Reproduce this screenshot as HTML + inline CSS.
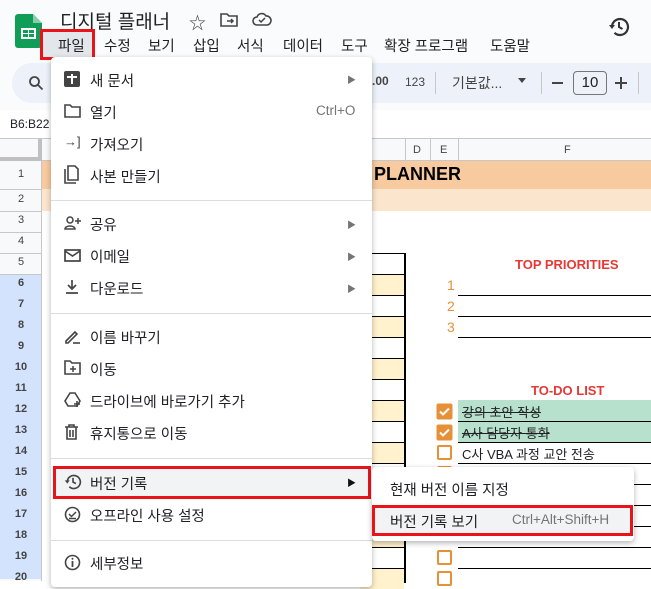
<!DOCTYPE html>
<html><head><meta charset="utf-8"><style>
*{margin:0;padding:0;box-sizing:border-box}
body{width:651px;height:579px;overflow:hidden;position:relative;background:#fff;font-family:"Liberation Sans","Noto Sans CJK KR",sans-serif;color:#202124}
.a{position:absolute}
.mi{position:absolute;left:90px;font-size:14.5px;color:#202124;white-space:nowrap}
.ic{position:absolute;left:64px}
.arr{position:absolute;left:347px;font-size:9px;color:#757575}
.div{position:absolute;left:51px;width:321px;height:1px;background:#dadce0}
.rn{position:absolute;left:0;width:42px;text-align:center;font-size:11px;color:#444}
.hl{position:absolute;height:1px;background:#000}
</style></head><body>
<div class="a" style="left:0;top:0;width:651px;height:110px;background:#f9fbfd"></div>
<svg class="a" style="left:15px;top:14px" width="27" height="34" viewBox="0 0 27 34"><path d="M3 0h15l9 9v22a3 3 0 0 1-3 3H3a3 3 0 0 1-3-3V3a3 3 0 0 1 3-3z" fill="#0f9d58"/><path d="M18 0v9h9z" fill="#87ceac"/><rect x="6" y="14" width="15" height="11" fill="#fff"/><rect x="8" y="16" width="5" height="3" fill="#0f9d58"/><rect x="14" y="16" width="5" height="3" fill="#0f9d58"/><rect x="8" y="20" width="5" height="3" fill="#0f9d58"/><rect x="14" y="20" width="5" height="3" fill="#0f9d58"/></svg>
<div class="a" style="left:60px;top:7px;font-size:19px;color:#202124">디지털 플래너</div>
<div class="a" style="left:189px;top:9px;font-size:17px;color:#444">☆</div>
<svg class="a" style="left:220px;top:12px" width="18" height="15" viewBox="0 0 18 15"><path d="M1 2h6l2 2h8v10H1z" fill="none" stroke="#444" stroke-width="1.6"/><path d="M7 9h6M11 7l2 2-2 2" stroke="#444" stroke-width="1.5" fill="none"/></svg>
<svg class="a" style="left:252px;top:12px" width="20" height="14" viewBox="0 0 20 14"><path d="M5 13a4 4 0 0 1 0-8 5 5 0 0 1 9-1 4.5 4.5 0 0 1 1 9z" fill="none" stroke="#444" stroke-width="1.6"/><path d="M7 8l2 2 4-4" fill="none" stroke="#444" stroke-width="1.5"/></svg>
<svg class="a" style="left:608px;top:16px" width="22" height="22" viewBox="0 0 22 22"><path d="M4 11a8 8 0 1 1 2.5 5.8" fill="none" stroke="#333" stroke-width="2.2"/><path d="M1 9l3 4 3-4z" fill="#333"/><path d="M11 6v5l3.5 2" fill="none" stroke="#333" stroke-width="2"/></svg>
<div class="a" style="left:42px;top:31px;width:51px;height:28px;background:#e3e6ea"></div>
<div class="a" style="top:35px;left:0;font-size:14.5px;color:#202124;white-space:nowrap">
<span class="a" style="left:58px">파일</span><span class="a" style="left:104px">수정</span><span class="a" style="left:148px">보기</span><span class="a" style="left:193px">삽입</span><span class="a" style="left:237px">서식</span><span class="a" style="left:283px">데이터</span><span class="a" style="left:341px">도구</span><span class="a" style="left:384px">확장 프로그램</span><span class="a" style="left:490px">도움말</span></div>
<div class="a" style="left:40px;top:29px;width:55px;height:31px;border:3px solid #e8141a"></div>
<div class="a" style="left:12px;top:63px;width:660px;height:40px;border-radius:20px;background:#edf2fa"></div>
<svg class="a" style="left:28px;top:75px" width="16" height="16" viewBox="0 0 16 16"><circle cx="6.5" cy="6.5" r="4.5" fill="none" stroke="#444" stroke-width="1.8"/><path d="M10 10l4.5 4.5" stroke="#444" stroke-width="1.8"/></svg>
<div class="a" style="left:372px;top:74px;font-size:12px;color:#444;font-weight:bold">.00</div>
<div class="a" style="left:405px;top:75px;font-size:12px;color:#444">123</div>
<div class="a" style="left:435px;top:72px;width:1px;height:22px;background:#c7c7c7"></div>
<div class="a" style="left:452px;top:73px;font-size:14px;color:#444">기본값...</div>
<div class="a" style="left:518px;top:78px;border:4px solid transparent;border-top:5px solid #444"></div>
<div class="a" style="left:541px;top:72px;width:1px;height:22px;background:#c7c7c7"></div>
<div class="a" style="left:552px;top:82px;width:11px;height:2px;background:#444"></div>
<div class="a" style="left:573px;top:71px;width:34px;height:24px;border:1px solid #747775;border-radius:4px;text-align:center;font-size:15px;line-height:22px;color:#202124">10</div>
<div class="a" style="left:615px;top:82px;width:12px;height:2px;background:#444"></div>
<div class="a" style="left:620px;top:77px;width:2px;height:12px;background:#444"></div>
<div class="a" style="left:638px;top:72px;width:1px;height:22px;background:#c7c7c7"></div>
<div class="a" style="left:10px;top:117px;font-size:12px;color:#202124">B6:B22</div>
<div class="a" style="left:0;top:138px;width:651px;height:1px;background:#c7c7c7"></div>
<div class="a" style="left:0;top:139px;width:651px;height:22px;background:#f8f9fa;border-bottom:1px solid #c7c7c7"></div>
<div class="a" style="left:0;top:139px;width:42px;height:22px;background:#f8f9fa;border-right:4px solid #c0c0c0;border-bottom:4px solid #c0c0c0"></div>
<div class="a" style="left:405px;top:139px;width:1px;height:22px;background:#c7c7c7"></div>
<div class="a" style="left:430px;top:139px;width:1px;height:22px;background:#c7c7c7"></div>
<div class="a" style="left:458px;top:139px;width:1px;height:22px;background:#c7c7c7"></div>
<div class="a" style="left:413px;top:144px;font-size:11px;color:#444">D</div>
<div class="a" style="left:440px;top:144px;font-size:11px;color:#444">E</div>
<div class="a" style="left:564px;top:144px;font-size:11px;color:#444">F</div>
<div class="a" style="left:0;top:161px;width:42px;height:420px;background:#f8f9fa;border-right:1px solid #c7c7c7"></div>
<div class="a" style="left:0;top:274px;width:42px;height:305px;background:#d3e3fd;border-right:1px solid #c7c7c7"></div>
<div class="rn" style="top:168px">1</div><div class="rn" style="top:193px">2</div><div class="rn" style="top:214px">3</div><div class="rn" style="top:235px">4</div><div class="rn" style="top:256px">5</div>
<div style="font-weight:bold">
<div class="rn" style="top:277px">6</div><div class="rn" style="top:298px">7</div><div class="rn" style="top:319px">8</div><div class="rn" style="top:340px">9</div><div class="rn" style="top:361px">10</div><div class="rn" style="top:382px">11</div><div class="rn" style="top:403px">12</div><div class="rn" style="top:424px">13</div><div class="rn" style="top:445px">14</div><div class="rn" style="top:466px">15</div><div class="rn" style="top:487px">16</div><div class="rn" style="top:508px">17</div><div class="rn" style="top:529px">18</div><div class="rn" style="top:550px">19</div><div class="rn" style="top:571px">20</div></div>
<div class="a" style="left:0;top:189px;width:42px;height:1px;background:#c7c7c7"></div>
<div class="a" style="left:0;top:211px;width:42px;height:1px;background:#c7c7c7"></div>
<div class="a" style="left:0;top:232px;width:42px;height:1px;background:#c7c7c7"></div>
<div class="a" style="left:0;top:253px;width:42px;height:1px;background:#c7c7c7"></div>
<div class="a" style="left:0;top:274px;width:42px;height:1px;background:#c7c7c7"></div>
<div class="a" style="left:42px;top:161px;width:609px;height:28px;background:#f7caa0"></div>
<div class="a" style="left:374px;top:164px;font-size:18px;font-weight:bold;color:#000">PLANNER</div>
<div class="a" style="left:42px;top:189px;width:609px;height:22px;background:#fce5cd"></div>
<div class="a" style="left:360px;top:274px;width:44px;height:21px;background:#fff2cc"></div>
<div class="a" style="left:360px;top:316px;width:44px;height:21px;background:#fff2cc"></div>
<div class="a" style="left:360px;top:358px;width:44px;height:21px;background:#fff2cc"></div>
<div class="a" style="left:360px;top:400px;width:44px;height:21px;background:#fff2cc"></div>
<div class="a" style="left:360px;top:442px;width:44px;height:21px;background:#fff2cc"></div>
<div class="a" style="left:360px;top:484px;width:44px;height:21px;background:#fff2cc"></div>
<div class="a" style="left:360px;top:526px;width:44px;height:21px;background:#fff2cc"></div>
<div class="a" style="left:360px;top:568px;width:44px;height:21px;background:#fff2cc"></div>
<div class="a" style="left:404px;top:253px;width:1.5px;height:330px;background:#000"></div>
<div class="hl" style="left:360px;width:45px;top:253px"></div><div class="hl" style="left:360px;width:45px;top:274px"></div><div class="hl" style="left:360px;width:45px;top:295px"></div><div class="hl" style="left:360px;width:45px;top:316px"></div><div class="hl" style="left:360px;width:45px;top:337px"></div><div class="hl" style="left:360px;width:45px;top:358px"></div><div class="hl" style="left:360px;width:45px;top:379px"></div><div class="hl" style="left:360px;width:45px;top:400px"></div><div class="hl" style="left:360px;width:45px;top:421px"></div><div class="hl" style="left:360px;width:45px;top:442px"></div><div class="hl" style="left:360px;width:45px;top:463px"></div><div class="hl" style="left:360px;width:45px;top:484px"></div><div class="hl" style="left:360px;width:45px;top:505px"></div><div class="hl" style="left:360px;width:45px;top:526px"></div><div class="hl" style="left:360px;width:45px;top:547px"></div><div class="hl" style="left:360px;width:45px;top:568px"></div>
<div class="a" style="left:515px;top:257px;font-size:13px;font-weight:bold;color:#e53935">TOP PRIORITIES</div>
<div class="a" style="left:447px;top:277px;font-size:14px;color:#e69138">1</div>
<div class="a" style="left:447px;top:298px;font-size:14px;color:#e69138">2</div>
<div class="a" style="left:447px;top:319px;font-size:14px;color:#e69138">3</div>
<div class="hl" style="left:458px;width:193px;top:295px"></div><div class="hl" style="left:458px;width:193px;top:316px"></div><div class="hl" style="left:458px;width:193px;top:337px"></div>
<div class="a" style="left:531px;top:383px;font-size:13px;font-weight:bold;color:#e53935">TO-DO LIST</div>
<div class="a" style="left:458px;top:400px;width:193px;height:42px;background:#b7e1cd"></div>
<div class="hl" style="left:458px;width:193px;top:421px"></div><div class="hl" style="left:458px;width:193px;top:442px"></div><div class="hl" style="left:458px;width:193px;top:463px"></div><div class="hl" style="left:458px;width:193px;top:484px"></div><div class="hl" style="left:458px;width:193px;top:505px"></div><div class="hl" style="left:458px;width:193px;top:526px"></div><div class="hl" style="left:458px;width:193px;top:547px"></div><div class="hl" style="left:458px;width:193px;top:568px"></div>
<div class="a" style="left:462px;top:402px;font-size:13px;text-decoration:line-through">강의 초안 작성</div>
<div class="a" style="left:462px;top:423px;font-size:13px;text-decoration:line-through">A사 담당자 통화</div>
<div class="a" style="left:462px;top:444px;font-size:13px">C사 VBA 과정 교안 전송</div>
<svg class="a" style="left:436px;top:403px" width="17" height="17" viewBox="0 0 17 17"><rect x="0.5" y="0.5" width="16" height="16" rx="2" fill="#e69138"/><path d="M4 8.5l3 3 6-6" stroke="#fff" stroke-width="2" fill="none"/></svg>
<svg class="a" style="left:436px;top:424px" width="17" height="17" viewBox="0 0 17 17"><rect x="0.5" y="0.5" width="16" height="16" rx="2" fill="#e69138"/><path d="M4 8.5l3 3 6-6" stroke="#fff" stroke-width="2" fill="none"/></svg>
<div class="a" style="left:437px;top:445px;width:15px;height:15px;border:2px solid #e69138;border-radius:2px"></div>
<div class="a" style="left:437px;top:466px;width:15px;height:15px;border:2px solid #e69138;border-radius:2px"></div>
<div class="a" style="left:437px;top:550px;width:15px;height:15px;border:2px solid #e69138;border-radius:2px"></div>
<div class="a" style="left:437px;top:571px;width:15px;height:15px;border:2px solid #e69138;border-radius:2px"></div>
<div class="a" style="left:51px;top:57px;width:321px;height:530px;background:#fff;border-radius:4px;box-shadow:0 2px 6px rgba(0,0,0,.3)"></div>
<svg class="ic" style="top:71px" width="16" height="16" viewBox="0 0 16 16"><rect width="16" height="16" rx="2" fill="#444"/><path d="M8 3v10M3 6h10" stroke="#fff" stroke-width="2"/></svg>
<div class="mi" style="top:70px">새 문서</div><div class="arr" style="top:73px">▶</div>
<svg class="ic" style="top:104px" width="17" height="14" viewBox="0 0 17 14"><path d="M1 1h5l2 2h8v10H1z" fill="none" stroke="#444" stroke-width="1.6"/></svg>
<div class="mi" style="top:102px">열기</div><div class="a" style="left:316px;top:103px;font-size:13.5px;color:#757575">Ctrl+O</div>
<div class="ic" style="top:134px;font-size:13px;color:#444">→]</div>
<div class="mi" style="top:134px">가져오기</div>
<svg class="ic" style="top:165px" width="16" height="19" viewBox="0 0 16 19"><path d="M1 4v14h11" fill="none" stroke="#444" stroke-width="1.6"/><path d="M4 1h7l3 3v11H4z" fill="none" stroke="#444" stroke-width="1.6"/></svg>
<div class="mi" style="top:166px">사본 만들기</div>
<div class="div" style="top:200px"></div>
<svg class="ic" style="top:216px" width="18" height="14" viewBox="0 0 18 14"><circle cx="6" cy="4" r="3" fill="none" stroke="#444" stroke-width="1.5"/><path d="M1 13c0-4 10-4 10 0z" fill="none" stroke="#444" stroke-width="1.5"/><path d="M14 2v6M11 5h6" stroke="#444" stroke-width="1.5"/></svg>
<div class="mi" style="top:214px">공유</div><div class="arr" style="top:218px">▶</div>
<svg class="ic" style="top:249px" width="17" height="13" viewBox="0 0 17 13"><rect x="1" y="1" width="15" height="11" fill="none" stroke="#444" stroke-width="1.7"/><path d="M1 2l7.5 5L16 2" fill="none" stroke="#444" stroke-width="1.6"/></svg>
<div class="mi" style="top:246px">이메일</div><div class="arr" style="top:250px">▶</div>
<svg class="ic" style="top:279px" width="16" height="16" viewBox="0 0 16 16"><path d="M8 1v9M4 6l4 4 4-4M2 14h12" fill="none" stroke="#444" stroke-width="1.7"/></svg>
<div class="mi" style="top:278px">다운로드</div><div class="arr" style="top:282px">▶</div>
<div class="div" style="top:313px"></div>
<svg class="ic" style="top:328px" width="17" height="16" viewBox="0 0 17 16"><path d="M2 13L11 4l2 2-9 9H2z" fill="none" stroke="#444" stroke-width="1.6"/><path d="M9 15h7" stroke="#444" stroke-width="1.6"/></svg>
<div class="mi" style="top:327px">이름 바꾸기</div>
<svg class="ic" style="top:360px" width="17" height="15" viewBox="0 0 17 15"><path d="M1 1h5l2 2h8v11H1z" fill="none" stroke="#444" stroke-width="1.6"/><path d="M6 9h6M9 6v6" stroke="#444" stroke-width="1.5"/></svg>
<div class="mi" style="top:359px">이동</div>
<svg class="ic" style="top:391px" width="18" height="17" viewBox="0 0 18 17"><path d="M6 2h5l5 8-3 5H4l-3-5z" fill="none" stroke="#444" stroke-width="1.6"/><path d="M13 10v6M10 13h6" stroke="#444" stroke-width="1.6"/></svg>
<div class="mi" style="top:391px">드라이브에 바로가기 추가</div>
<svg class="ic" style="top:424px" width="15" height="16" viewBox="0 0 15 16"><path d="M1 3h13M5 3V1h5v2M3 3v12h9V3M6 6v7M9 6v7" fill="none" stroke="#444" stroke-width="1.6"/></svg>
<div class="mi" style="top:423px">휴지통으로 이동</div>
<div class="div" style="top:458px"></div>
<div class="a" style="left:53px;top:466px;width:318px;height:33px;background:#f1f3f4;border:3px solid #e8141a"></div>
<svg class="ic" style="top:473px" width="18" height="18" viewBox="0 0 22 22"><path d="M4 11a8 8 0 1 1 2.5 5.8" fill="none" stroke="#444" stroke-width="2"/><path d="M1 9l3 4 3-4z" fill="#444"/><path d="M11 6v5l3.5 2" fill="none" stroke="#444" stroke-width="2"/></svg>
<div class="mi" style="top:473px">버전 기록</div><div class="arr" style="top:476px;color:#111">▶</div>
<svg class="ic" style="top:506px" width="17" height="17" viewBox="0 0 17 17"><circle cx="8.5" cy="8.5" r="7" fill="none" stroke="#444" stroke-width="1.6"/><path d="M5 8l2.5 2.5L12 6M5 12.5h7" fill="none" stroke="#444" stroke-width="1.5"/></svg>
<div class="mi" style="top:505px">오프라인 사용 설정</div>
<div class="div" style="top:540px"></div>
<svg class="ic" style="top:554px" width="17" height="17" viewBox="0 0 17 17"><circle cx="8.5" cy="8.5" r="7" fill="none" stroke="#444" stroke-width="1.6"/><path d="M8.5 7v6" stroke="#444" stroke-width="1.8"/><circle cx="8.5" cy="4.8" r="1" fill="#444"/></svg>
<div class="mi" style="top:553px">세부정보</div>
<div class="a" style="left:372px;top:467px;width:262px;height:74px;background:#fff;border-radius:4px;box-shadow:0 2px 6px rgba(0,0,0,.3)"></div>
<div class="a" style="left:390px;top:479px;font-size:14.5px">현재 버전 이름 지정</div>
<div class="a" style="left:372px;top:505px;width:261px;height:31px;background:#f1f3f4;border:3px solid #e8141a"></div>
<div class="a" style="left:390px;top:511px;font-size:14.5px">버전 기록 보기</div>
<div class="a" style="left:512px;top:512px;font-size:13.5px;color:#757575">Ctrl+Alt+Shift+H</div>
</body></html>
